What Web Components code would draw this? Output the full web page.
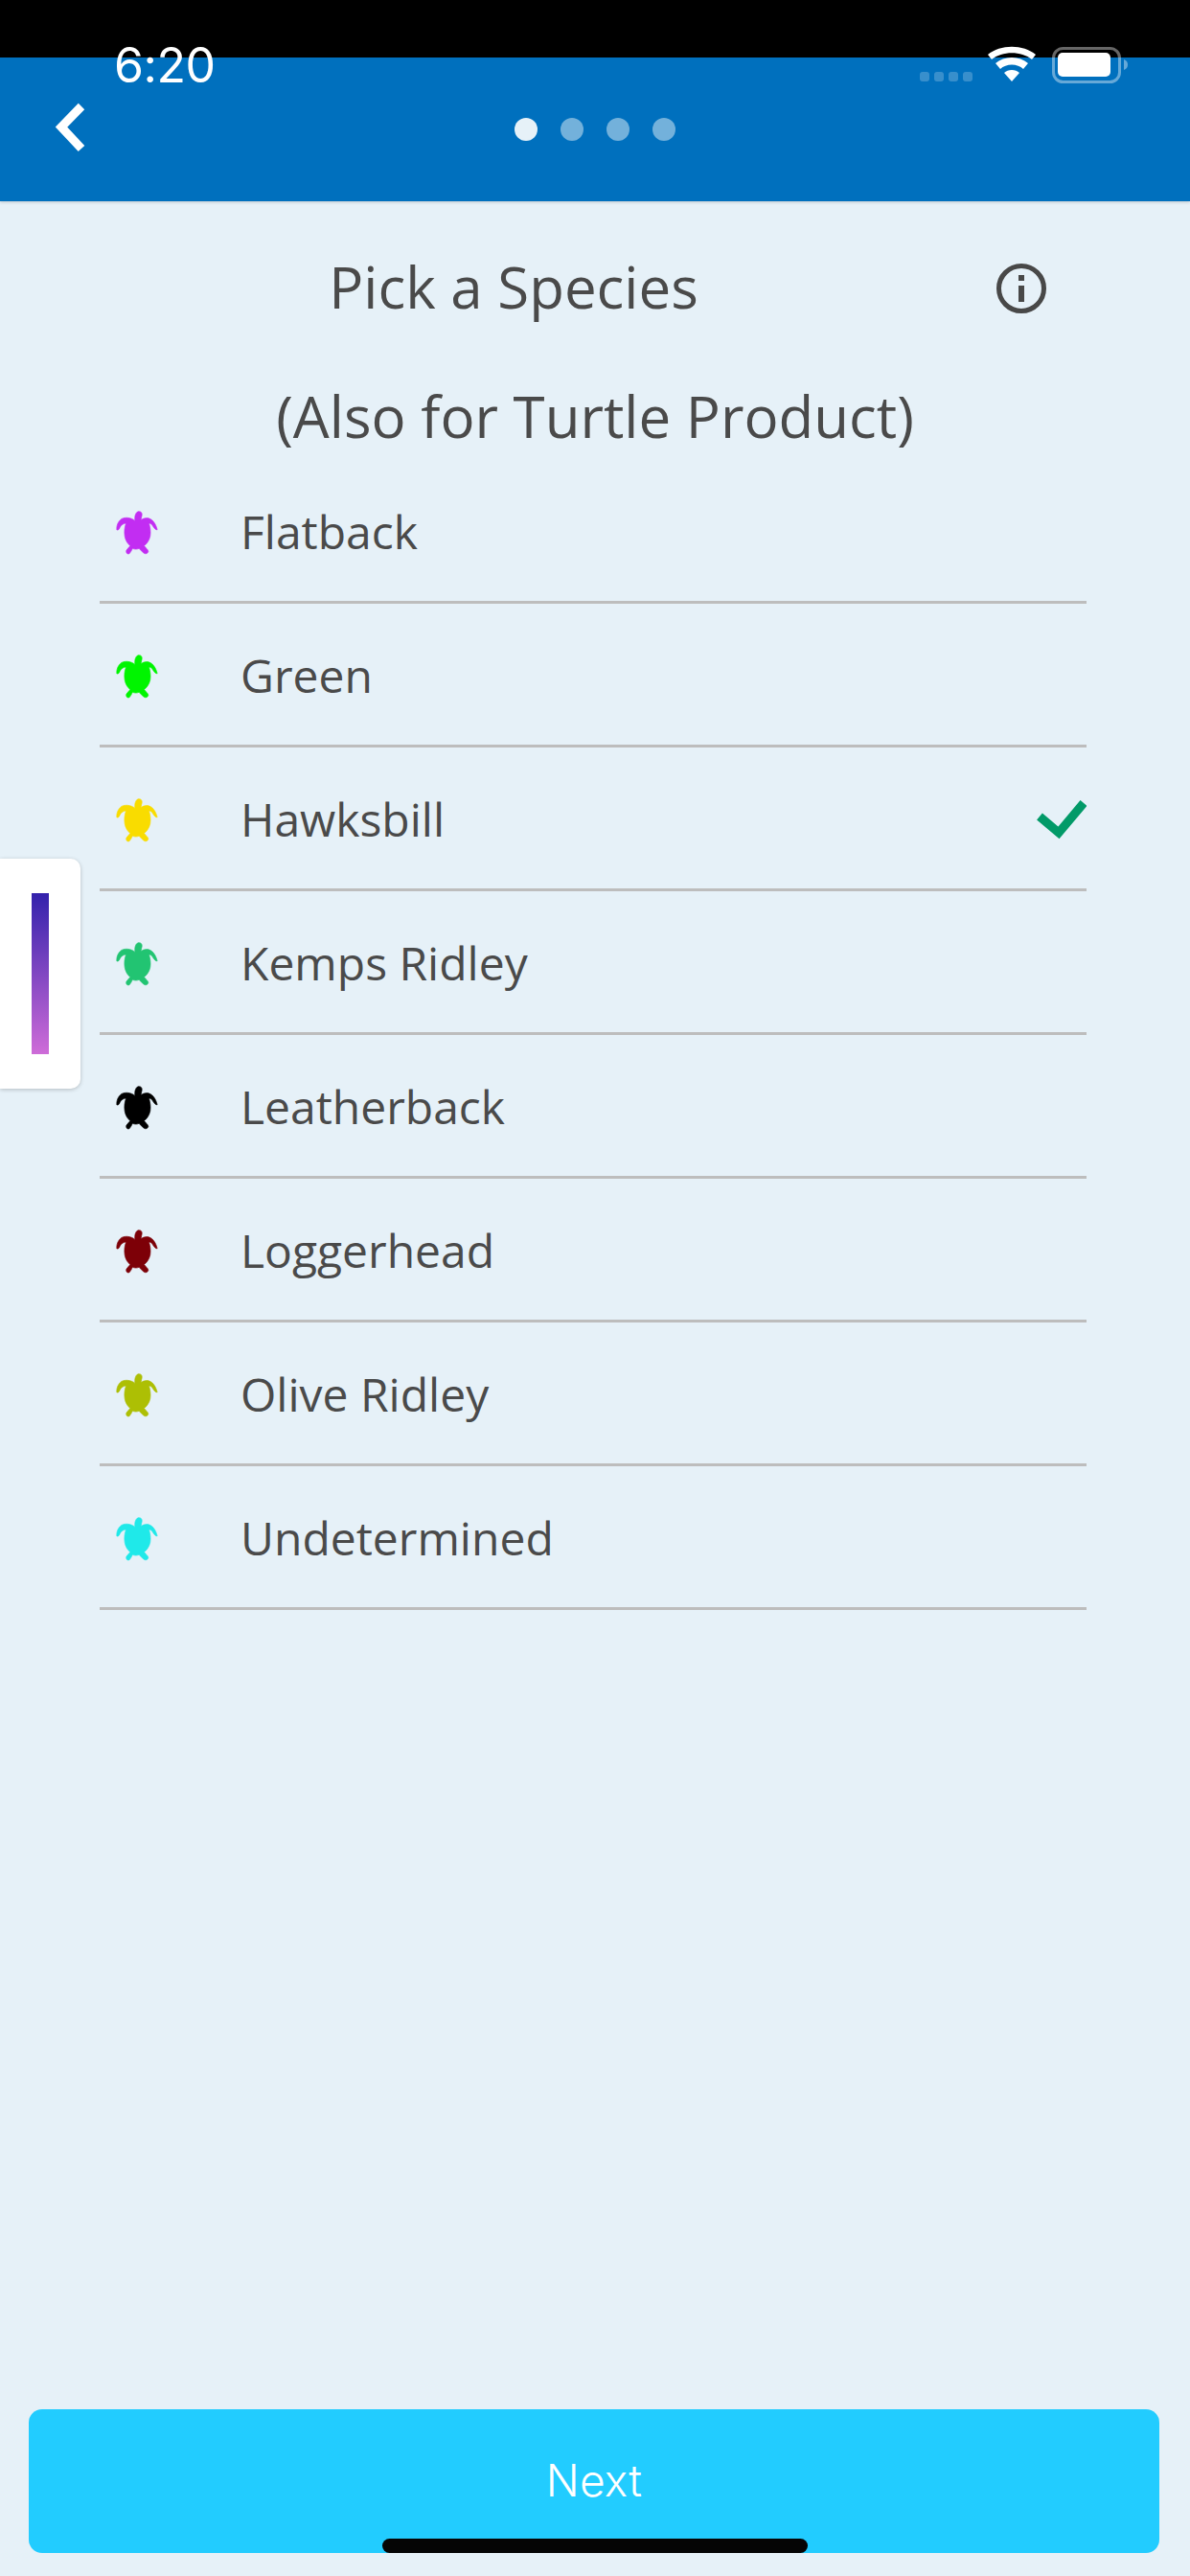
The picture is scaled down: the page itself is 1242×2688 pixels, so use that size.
<!DOCTYPE html>
<html lang="en"><head><meta charset="utf-8"><title>Pick a Species</title>
<style>
html,body{margin:0;padding:0;background:#E6F1F8}
body{width:1242px;height:2688px;overflow:hidden;font-family:"Open Sans",sans-serif}
</style></head><body>
<app-screen>
  <status-bar slot="status"></status-bar>
  <app-header slot="header"></app-header>
  <main-title slot="title" heading="Pick a Species" sub="(Also for Turtle Product)"></main-title>
  <species-row color="#C22DF2" label="Flatback"></species-row>
  <species-row color="#00F500" label="Green"></species-row>
  <species-row color="#F9DC00" label="Hawksbill" checked></species-row>
  <species-row color="#22C472" label="Kemps Ridley"></species-row>
  <species-row color="#000000" label="Leatherback"></species-row>
  <species-row color="#7D0007" label="Loggerhead"></species-row>
  <species-row color="#ADBF04" label="Olive Ridley"></species-row>
  <species-row color="#1FE9E9" label="Undetermined"></species-row>
  <side-tab slot="over"></side-tab>
  <next-button slot="foot">Next</next-button>
  <home-bar slot="over"></home-bar>
</app-screen>
<script>
function def(name, html){
  customElements.define(name, class extends HTMLElement{
    connectedCallback(){
      if(this.shadowRoot) return;
      const r=this.attachShadow({mode:'open'});
      r.innerHTML=typeof html==='function'?html(this):html;
    }
  });
}
def('app-screen',`<style>
:host{display:flex;flex-direction:column;position:relative;width:1242px;height:2688px;background:#E6F1F8;overflow:hidden}
.list{display:flex;flex-direction:column;padding:0 108px 0 104px;flex:1}
.foot{padding:0 32px 24px 30px}
</style>
<slot name="status"></slot>
<slot name="header"></slot>
<slot name="title"></slot>
<div class="list"><slot></slot></div>
<div class="foot"><slot name="foot"></slot></div>
<slot name="over"></slot>`);
def('status-bar',`<style>
:host{display:block;height:60px;background:#000;position:relative;z-index:3;overflow:visible}
.t{position:absolute;left:119px;top:43px;font:400 50px/50px Inter,Roboto,sans-serif;color:#fff;letter-spacing:-.5px}
.s{position:absolute;left:0;top:0;overflow:visible}
</style><span class="t">6:20</span>
<svg class="s" width="1242" height="100" viewBox="0 0 1242 100">
<g fill="#fff" opacity=".22"><rect x="960" y="75" width="10" height="10" rx="3"/><rect x="975" y="75" width="10" height="10" rx="3"/><rect x="990" y="75" width="10" height="10" rx="3"/><rect x="1005" y="75" width="10" height="10" rx="3"/></g>
<path fill="#fff" d="M1056 85l-8-9c4-4 12-4 16 0zM1044 72l-5-6c9-8 25-8 34 0l-5 6c-6-6-18-6-24 0zM1035 62l-4-5c13-11 37-11 50 0l-4 5c-11-9-31-9-42 0z"/>
<rect x="1099.5" y="50.5" width="69" height="35" rx="10" fill="none" stroke="#fff" stroke-opacity=".4" stroke-width="3"/>
<rect x="1104" y="55" width="55" height="25" rx="5" fill="#fff"/>
<path d="M1173 62c3 1 4 3 4 5.500s-1 4.500-4 5.500z" fill="#fff" opacity=".4"/>
</svg>`);
def('app-header',`<style>
:host{display:flex;align-items:center;justify-content:center;position:relative;height:150px;background:#0070BE;box-shadow:0 1px 3px rgba(0,0,0,.18);z-index:2;gap:24px;box-sizing:border-box}
svg{position:absolute;left:50px;top:43px}
i{display:block;width:24px;height:24px;border-radius:50%;background:#E6F1F8;opacity:.5}
i:first-of-type{opacity:1}
</style>
<svg width="48" height="56" viewBox="0 0 48 56"><path d="M35 8L14 29.500 35 52" fill="none" stroke="#fff" stroke-width="9"/></svg>
<i></i><i></i><i></i><i></i>`);
def('main-title',h=>`<style>
:host{display:block;color:#4A4A4A;font:400 60px/90px "Open Sans",sans-serif;padding-top:46px}
.row{display:flex;align-items:center;padding:0 150px 0 32px;height:90px;margin-bottom:44px}
.h{flex:1;text-align:center;position:relative;top:-2px}
svg{display:block}
.sub{text-align:center;height:90px;position:relative;top:-1px}
</style>
<div class="row"><div class="h">${h.getAttribute('heading')}</div>
<svg width="52" height="52" viewBox="0 0 52 52"><circle cx="26" cy="26" r="23.500" fill="none" stroke="#484848" stroke-width="5"/><rect x="23" y="12" width="6" height="6" fill="#484848"/><rect x="23" y="23" width="6" height="17" fill="#484848"/></svg></div>
<div class="sub">${h.getAttribute('sub')}</div>`);
def('species-row',h=>`<style>
:host{display:flex;align-items:center;height:150px;box-sizing:border-box;border-bottom:3px solid #BDBDBD;color:#4A4A4A;font:400 48px/60px "Open Sans",sans-serif}
.ic{width:44px;height:47px;margin-left:17px;margin-right:87px;flex:none;display:block;position:relative;top:2px}
.l{flex:1;position:relative;top:1px;left:-1px}
.ck{display:block;position:relative;top:1px}
</style>
<svg class="ic" viewBox="90 66 130 140"><path stroke="${h.getAttribute('color')}" stroke-width="2" stroke-linejoin="round" fill="${h.getAttribute('color')}" d="M149 100C147 90 149 74 159 71 171 70 172 80 169 88L167 98C175 92 185 90 193 93 206 98 214 112 218 128 212 129 208 122 204 116 201 111 197 108 192 108 196 120 198 134 196 147 193 161 186 171 177 178 181 184 190 189 190 196 186 205 177 203 173 198L161 186C155 189 148 189 141 186 138 192 135 199 130 203 123 204 120 198 122 192 125 187 131 182 134 178 125 171 119 160 117 148 115 135 116 120 121 108 113 108 106 113 102 120 100 126 96 131 92 128 91 115 96 102 107 94 120 88 136 90 149 100Z"/></svg>
<span class="l">${h.getAttribute('label')}</span>
${h.hasAttribute('checked')?`<svg class="ck" width="52" height="46" viewBox="0 0 52 46"><path d="M3 20L23 37 49 6" fill="none" stroke="#029A68" stroke-width="9"/></svg>`:''}`);
def('side-tab',`<style>
:host{display:flex;justify-content:center;align-items:center;position:absolute;left:0;top:896px;width:84px;height:240px;background:#fff;border-radius:0 10px 10px 0;box-shadow:0 1px 4px rgba(0,0,0,.22);z-index:2}
i{display:block;width:18px;height:168px;background:linear-gradient(#3322AC,#CE6CD8)}
</style><i></i>`);
def('next-button',`<style>
:host{display:flex;align-items:center;justify-content:center;height:150px;border-radius:14px;background:#22CCFF;color:#fff;font:300 46px/50px Inter,Roboto,sans-serif}
span{position:relative;top:-1px;letter-spacing:.3px}
</style><span><slot></slot></span>`);
def('home-bar',`<style>
:host{display:block;position:absolute;left:399px;top:2649px;width:444px;height:15px;border-radius:8px;background:#050505;z-index:3}
</style>`);
</script>
</body></html>
